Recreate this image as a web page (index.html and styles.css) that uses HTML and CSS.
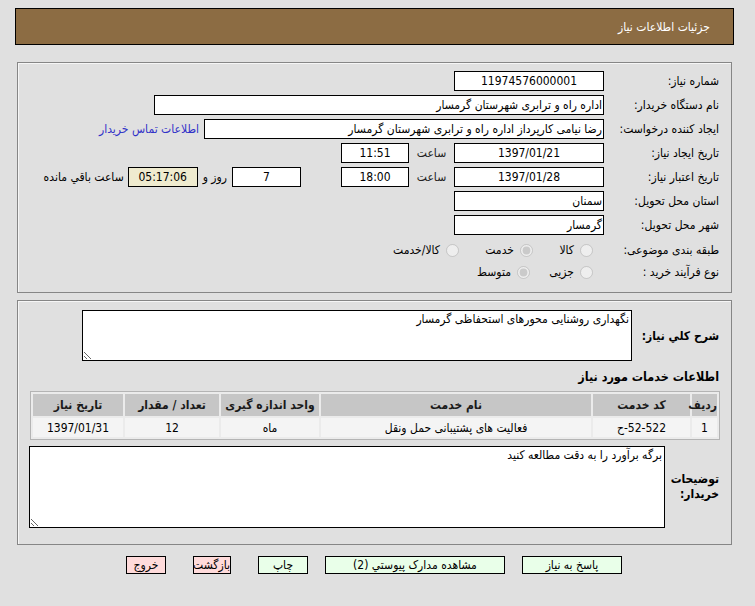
FILE: index.html
```html
<!DOCTYPE html>
<html lang="fa" dir="rtl">
<head>
<meta charset="utf-8">
<title>جزئیات اطلاعات نیاز</title>
<link rel="stylesheet" href="styles.css">
</head>
<body>
<div class="page">
  <div class="header"><span>جزئیات اطلاعات نیاز</span></div>

  <div class="panel p1">
    <div class="row">
      <div class="lbl">شماره نیاز:</div>
      <div class="box w150">11974576000001</div>
    </div>
    <div class="row">
      <div class="lbl">نام دستگاه خریدار:</div>
      <div class="box txt w450">اداره راه و ترابری شهرستان گرمسار</div>
    </div>
    <div class="row">
      <div class="lbl">ایجاد کننده درخواست:</div>
      <div class="box txt w400">رضا نیامی کارپرداز اداره راه و ترابری شهرستان گرمسار</div>
      <a class="link" href="#">اطلاعات تماس خریدار</a>
    </div>
    <div class="row">
      <div class="lbl">تاریخ ایجاد نیاز:</div>
      <div class="box w150">1397/01/21</div>
      <div class="at">ساعت</div>
      <div class="box w68">11:51</div>
    </div>
    <div class="row">
      <div class="lbl">تاریخ اعتبار نیاز:</div>
      <div class="box w150">1397/01/28</div>
      <div class="at">ساعت</div>
      <div class="box w68">18:00</div>
      <div class="box w69 days">7</div>
      <div class="unit">روز و</div>
      <div class="box w70 remain">05:17:06</div>
      <div class="rest">ساعت باقي مانده</div>
    </div>
    <div class="row">
      <div class="lbl">استان محل تحویل:</div>
      <div class="box txt w150">سمنان</div>
    </div>
    <div class="row">
      <div class="lbl">شهر محل تحویل:</div>
      <div class="box txt w150">گرمسار</div>
    </div>
    <div class="rrow first">
      <div class="lbl">طبقه بندی موضوعی:</div>
      <div class="group">
        <label class="opt oa"><input type="radio" name="cat" disabled><span>کالا</span></label>
        <label class="opt ob"><input type="radio" name="cat" checked disabled><span>خدمت</span></label>
        <label class="opt"><input type="radio" name="cat" disabled><span>کالا/خدمت</span></label>
      </div>
    </div>
    <div class="rrow">
      <div class="lbl">نوع فرآیند خرید :</div>
      <div class="group">
        <label class="opt oa2"><input type="radio" name="kind" disabled><span>جزیی</span></label>
        <label class="opt"><input type="radio" name="kind" checked disabled><span>متوسط</span></label>
      </div>
    </div>
  </div>

  <div class="panel p2">
    <div class="desc">
      <div class="blbl">شرح کلي نیاز:</div>
      <textarea class="ta ta1" readonly>نگهداری روشنایی محورهای استحفاظی گرمسار</textarea>
    </div>
    <div class="h2">اطلاعات خدمات مورد نیاز</div>
    <table class="grid">
      <colgroup>
        <col class="c1"><col class="c2"><col class="c3"><col class="c4"><col class="c5"><col class="c6">
      </colgroup>
      <thead>
        <tr>
          <th>ردیف</th>
          <th>کد خدمت</th>
          <th>نام خدمت</th>
          <th>واحد اندازه گیری</th>
          <th>تعداد / مقدار</th>
          <th>تاریخ نیاز</th>
        </tr>
      </thead>
      <tbody>
        <tr>
          <td>1</td>
          <td><bdo dir="ltr">ح-52-522</bdo></td>
          <td>فعالیت های پشتیبانی حمل ونقل</td>
          <td>ماه</td>
          <td>12</td>
          <td>1397/01/31</td>
        </tr>
      </tbody>
    </table>
    <div class="notes">
      <div class="blbl nl">توضیحات خریدار:</div>
      <textarea class="ta ta2" readonly>برگه برآورد را به دقت مطالعه کنید</textarea>
    </div>
  </div>

  <div class="buttons">
    <button class="btn green b1" type="button">پاسخ به نیاز</button>
    <button class="btn green b2" type="button">مشاهده مدارک پیوستي (2)</button>
    <button class="btn green b3" type="button">چاپ</button>
    <button class="btn pink b4" type="button">بازگشت</button>
    <button class="btn pink b5" type="button">خروج</button>
  </div>
</div>
</body>
</html>
```

FILE: styles.css
```css
* {
  box-sizing: border-box;
}

html,
body {
  margin: 0;
  padding: 0;
}

body {
  background: #e0e0e0;
  color: #000;
  direction: rtl;
  font-family: "DejaVu Sans Condensed", "DejaVu Sans", sans-serif;
  font-size: 12px;
}

.page {
  padding-top: 8px;
}

.header {
  margin: 0 21px 0 15px;
  height: 37px;
  background: #8c6c43;
  border: 1px solid #000;
  display: flex;
  align-items: center;
  padding-right: 23px;
  color: #fff;
  font-size: 12px;
}

.panel {
  margin: 0 23px 0 17px;
  border: 1px solid #868686;
  box-shadow: inset 1px 1px 0 #f6f6f6;
}

.p1 {
  margin-top: 17px;
  padding: 8px 12px 9px 12px;
}

.row {
  display: flex;
  align-items: center;
  height: 20px;
  margin-bottom: 4px;
  white-space: nowrap;
}

.lbl {
  flex: none;
  width: 115px;
  white-space: nowrap;
}

.box {
  flex: none;
  height: 20px;
  border: 1px solid #000;
  background: #fff;
  display: flex;
  align-items: center;
  justify-content: center;
  padding: 0 2px;
  white-space: nowrap;
  overflow: hidden;
}

.box.txt {
  justify-content: flex-start;
  padding: 0 1px;
}

.w150 { width: 150px; }
.w450 { width: 450px; }
.w400 { width: 400px; }
.w68 { width: 68px; }
.w69 { width: 69px; }
.w70 { width: 70px; }

.link {
  margin-right: 5px;
  color: #3232c8;
  text-decoration: none;
}

.at {
  flex: none;
  width: 45px;
  text-align: center;
  color: #222;
}

.days {
  margin-right: 40px;
}

.unit {
  flex: none;
  margin: 0 5px;
}

.remain {
  background: #efebcf;
}

.rest {
  flex: none;
  margin-right: 4px;
}

.rrow {
  display: flex;
  align-items: center;
  height: 22px;
}

.rrow.first {
  margin-top: 2px;
}

.group {
  display: flex;
  align-items: center;
  padding-right: 11px;
}

.opt {
  display: flex;
  align-items: center;
  gap: 6px;
  white-space: nowrap;
}

.opt input {
  margin: 0;
  width: 13px;
  height: 13px;
}

.oa { width: 60px; }
.ob { width: 74px; }
.oa2 { width: 63px; }

.p2 {
  margin-top: 7px;
  height: 245px;
  padding: 9px 12px 0 12px;
}

.desc,
.notes {
  display: flex;
  align-items: center;
}

.blbl {
  flex: none;
  font-weight: bold;
  font-size: 12px;
}

.desc .blbl {
  width: 87px;
}

.ta {
  display: block;
  flex: none;
  border: 1px solid #000;
  background: #fff;
  font-family: "DejaVu Sans Condensed", "DejaVu Sans", sans-serif;
  font-size: 12px;
  padding: 1px 2px;
  margin: 0;
  color: #000;
  outline: none;
}

.ta1 {
  width: 550px;
  height: 51px;
}

.h2 {
  height: 16px;
  line-height: 16px;
  margin: 8px 0 6px;
  font-weight: bold;
  font-size: 12.5px;
}

.grid {
  width: 690px;
  margin-right: -1px;
  table-layout: fixed;
  border-collapse: separate;
  border-spacing: 2px;
  border: 1px solid #b4b4b4;
  background: #ebebeb;
  font-size: 12px;
}

.grid .c1 { width: 25px; }
.grid .c2 { width: 97px; }
.grid .c3 { width: 270px; }
.grid .c4 { width: 98px; }
.grid .c5 { width: 94px; }
.grid .c6 { width: 90px; }

.grid th {
  height: 22px;
  background: #c6c6c6;
  font-weight: bold;
  color: #1a1a1a;
  padding: 0;
  text-align: center;
  white-space: nowrap;
}

.grid td {
  height: 19px;
  background: #f4f4f4;
  padding: 0;
  text-align: center;
  white-space: nowrap;
}

.notes {
  margin-top: 6px;
}

.nl {
  width: 54px;
  line-height: 15px;
  white-space: normal;
  padding-left: 4px;
}

.ta2 {
  width: 636px;
  height: 82px;
  margin-left: -1px;
}

.buttons {
  display: flex;
  justify-content: center;
  align-items: center;
  margin-top: 11px;
  padding-right: 7px;
}

.btn {
  flex: none;
  height: 18px;
  border: 1px solid #000;
  padding: 0;
  font-family: "DejaVu Sans Condensed", "DejaVu Sans", sans-serif;
  font-size: 12px;
  color: #000;
  text-align: center;
  line-height: 16px;
  white-space: nowrap;
}

.green { background: #e9ffe9; }
.pink { background: #ffdbdb; }

.b1 { width: 100px; }
.b2 { width: 180px; margin-right: 17px; }
.b3 { width: 50px; margin-right: 17px; }
.b4 { width: 38px; margin-right: 27px; }
.b5 { width: 40px; margin-right: 27px; }
```
